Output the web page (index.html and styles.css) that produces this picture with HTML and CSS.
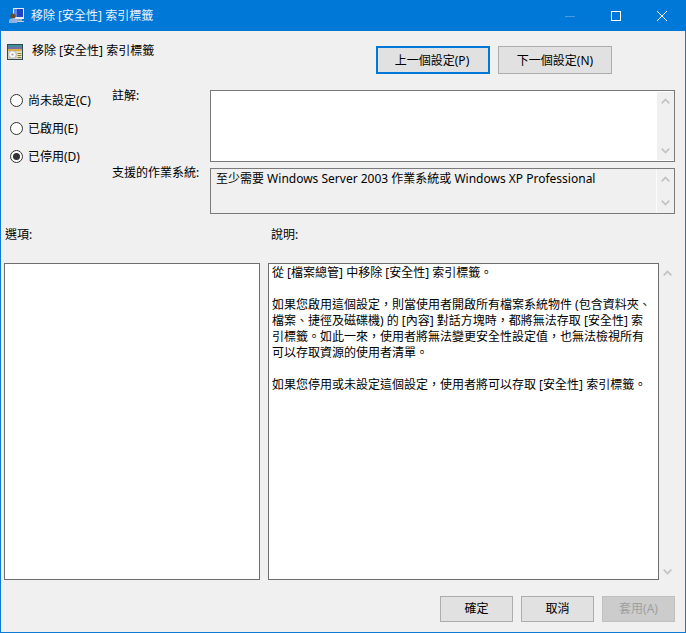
FILE: index.html
```html
<!DOCTYPE html>
<html lang="zh-Hant">
<head>
<meta charset="utf-8">
<title>移除 [安全性] 索引標籤</title>
<link rel="stylesheet" href="styles.css">
</head>
<body>
<svg class="defs" width="0" height="0" aria-hidden="true">
  <symbol id="up" viewBox="0 0 9 6"><path d="M.7 5.300 4.500 1.500l3.800 3.800" fill="none" stroke="currentColor" stroke-width="1.700"/></symbol>
  <symbol id="down" viewBox="0 0 9 6"><path d="M.7.7l3.800 3.800L8.300.7" fill="none" stroke="currentColor" stroke-width="1.700"/></symbol>
</svg>
<div class="window">
  <header class="titlebar">
    <svg class="icon" viewBox="0 0 16 16" aria-hidden="true">
      <rect x="4" y="0" width="11" height="11" fill="#e4ecf6"/>
      <rect x="5" y="1" width="9" height="8" fill="#1f45c4"/>
      <rect x="5" y="1" width="3" height="8" fill="#5f86e0"/>
      <rect x="7" y="11" width="6" height="2" fill="#9aa6b8"/>
      <rect x="5" y="13" width="10" height="1" fill="#c4ccd8"/>
      <circle cx="4" cy="8" r="2.600" fill="#6b4a2c"/>
      <path d="M0 15v-2c0-1.800 1.700-2.800 4-2.800S8 11.200 8 13v2z" fill="#8db4e0"/>
    </svg>
    <span class="title">移除 [安全性] 索引標籤</span>
    <div class="controls">
      <span class="control"><svg width="10" height="10" viewBox="0 0 10 10"><path d="M0 5.500h10" stroke="#4a9be0"/></svg></span>
      <span class="control"><svg width="10" height="10" viewBox="0 0 10 10"><rect x=".5" y=".5" width="9" height="9" fill="none" stroke="#fff"/></svg></span>
      <span class="control"><svg width="10" height="10" viewBox="0 0 10 10"><path d="M0 0l10 10M10 0 0 10" stroke="#fff"/></svg></span>
    </div>
  </header>
  <main class="content">
    <section class="head">
      <svg class="policy-icon" viewBox="0 0 16 16" aria-hidden="true">
        <rect x="0" y="0" width="16" height="16" fill="#2f4a50"/>
        <rect x="1" y="1" width="14" height="2" fill="#3f8f96"/>
        <rect x="1" y="3" width="14" height="2" fill="#7a6aa8"/>
        <rect x="1" y="5" width="14" height="2" fill="#d8b040"/>
        <rect x="1" y="7" width="14" height="8" fill="#d8d4c0"/>
        <circle cx="5.500" cy="10.500" r="3.800" fill="#f6f6f6" stroke="#9a9a9a" stroke-width=".6"/>
        <circle cx="5.500" cy="10.500" r="1.100" fill="#98a0a8"/>
        <rect x="10" y="8" width="5" height="6" fill="#f2e6a8"/>
        <path d="M10.500 9.500h4M10.500 11.500h4M10.500 13.500h4" stroke="#8a7a3a"/>
      </svg>
      <span class="policy-name">移除 [安全性] 索引標籤</span>
      <div class="nav">
        <button class="btn btn-nav btn-default">上一個設定(P)</button>
        <button class="btn btn-nav">下一個設定(N)</button>
      </div>
    </section>
    <section class="settings">
      <div class="radios">
        <label class="radio"><input type="radio" name="s"><span class="radio-text">尚未設定(C)</span></label>
        <label class="radio"><input type="radio" name="s"><span class="radio-text">已啟用(E)</span></label>
        <label class="radio"><input type="radio" name="s" checked><span class="radio-text">已停用(D)</span></label>
      </div>
      <div class="fields">
        <div class="label label-comment">註解:</div>
        <div class="box box-comment">
          <div class="box-body"></div>
          <div class="scroll scroll-comment"><svg class="chev"><use href="#up"/></svg><svg class="chev"><use href="#down"/></svg></div>
        </div>
        <div class="label label-support">支援的作業系統:</div>
        <div class="box box-support">
          <div class="box-body">至少需要 Windows Server 2003 作業系統或 Windows XP Professional</div>
          <div class="scroll scroll-support"><svg class="chev"><use href="#up"/></svg><svg class="chev"><use href="#down"/></svg></div>
        </div>
      </div>
    </section>
    <section class="pane-labels">
      <div class="label">選項:</div>
      <div class="label label-help">說明:</div>
    </section>
    <section class="panes">
      <div class="pane"></div>
      <div class="help-wrap">
        <div class="pane help">從 [檔案總管] 中移除 [安全性] 索引標籤。<br><br>如果您啟用這個設定&#xFF0C;則當使用者開啟所有檔案系統物件 (包含資料夾、<br>檔案、捷徑及磁碟機) 的 [內容] 對話方塊時&#xFF0C;都將無法存取 [安全性] 索<br>引標籤。如此一來&#xFF0C;使用者將無法變更安全性設定值&#xFF0C;也無法檢視所有<br>可以存取資源的使用者清單。<br><br>如果您停用或未設定這個設定&#xFF0C;使用者將可以存取 [安全性] 索引標籤。</div>
        <div class="scroll scroll-help"><svg class="chev"><use href="#up"/></svg><svg class="chev"><use href="#down"/></svg></div>
      </div>
    </section>
    <footer class="footer">
      <button class="btn btn-foot">確定</button>
      <button class="btn btn-foot">取消</button>
      <button class="btn btn-foot btn-disabled">套用(A)</button>
    </footer>
  </main>
</div>
</body>
</html>
```
FILE: styles.css
```css
* { box-sizing: border-box; }
html, body { margin: 0; padding: 0; }
body {
  font-family: "Noto Sans", "Noto Sans CJK TC", sans-serif;
  font-size: 12px;
  line-height: 16px;
  color: #000;
  background: #f0f0f0;
}
.defs { position: absolute; }
.window {
  width: 686px;
  height: 633px;
  border: 1px solid #0f7ad6;
  border-top: 0;
  background: #f0f0f0;
  display: flex;
  flex-direction: column;
}
.titlebar {
  height: 31px;
  flex: none;
  margin: 0 -1px;
  padding: 0 1px 0 9px;
  background: #0078d7;
  color: #e8f2fb;
  display: flex;
  align-items: center;
}
.icon { width: 16px; height: 16px; margin-right: 6px; }
.title { white-space: nowrap; }
.controls { margin-left: auto; display: flex; }
.control { width: 46px; height: 31px; display: flex; align-items: center; justify-content: center; }
.control svg { display: block; }

.content { flex: 1; display: flex; flex-direction: column; }

.head { height: 55px; flex: none; display: flex; align-items: flex-start; padding: 13px 73px 0 6px; }
.policy-icon { width: 16px; height: 16px; flex: none; }
.policy-name { margin-left: 9px; margin-top: -1px; white-space: nowrap; }
.nav { margin-left: auto; margin-top: 2px; display: flex; gap: 8px; }

.btn {
  font: inherit;
  color: #000;
  background: #e1e1e1;
  border: 1px solid #adadad;
  padding: 0;
  white-space: nowrap;
}
.btn-nav { width: 114px; height: 28px; padding-top: 2px; }
.btn-default { border: 2px solid #0078d7; padding-right: 2px; }
.btn-foot { width: 73px; height: 26px; }
.btn-disabled { background: #cccccc; border-color: #bfbfbf; color: #a0a0a0; }

.settings { display: flex; flex: none; }
.radios { width: 112px; flex: none; padding-left: 9px; display: flex; flex-direction: column; }
.radio { height: 28px; display: flex; align-items: center; white-space: nowrap; }
.radio-text { padding-top: 2px; }
.radio input {
  appearance: none;
  width: 13px;
  height: 13px;
  margin: 0 5px 0 0;
  border: 1px solid #333;
  border-radius: 50%;
  background: #fff;
  flex: none;
  display: flex;
  align-items: center;
  justify-content: center;
}
.radio input:checked::after {
  content: "";
  width: 7px;
  height: 7px;
  border-radius: 50%;
  background: #333;
}
.fields { display: grid; grid-template-columns: 97px 466px; grid-template-rows: 76px 52px; margin-left: -1px; padding-right: 1px; }
.box { margin-left: 1px; }
.label { white-space: nowrap; }
.label-comment { padding-top: 2px; }
.label-support { padding-top: 3px; }
.box { border: 1px solid #7a7a7a; display: flex; }
.box-comment { height: 72px; margin-top: 4px; background: #fff; }
.box-support { height: 46px; margin-top: 6px; background: #f0f0f0; }
.box-body { flex: 1; padding: 2px 5px; white-space: nowrap; }
.scroll {
  flex: none;
  display: flex;
  flex-direction: column;
  justify-content: space-between;
  align-items: center;
  color: #c2c2c2;
  background: #f0f0f0;
}
.chev { width: 9px; height: 6px; display: block; }
.scroll-comment { width: 17px; margin: 1px 0; padding: 6px 0 6px; }
.scroll-support { width: 18px; border-left: 1px solid #fbfbfb; padding: 7px 0 7px; }
.scroll-help { width: 17px; padding: 7px 0 5px; }

.pane-labels { display: grid; grid-template-columns: 256px 408px; column-gap: 8px; margin-top: 13px; padding-left: 4px; flex: none; }
.label-help { padding-left: 2px; }
.panes { display: grid; grid-template-columns: 256px 408px; column-gap: 8px; margin-top: 20px; padding-left: 3px; flex: none; }
.pane { height: 317px; border: 1px solid #6e6e6e; background: #fff; }
.help-wrap { display: flex; height: 317px; }
.help { flex: 1; padding: 1px 3px 0; white-space: nowrap; }

.footer { display: flex; justify-content: flex-end; gap: 8px; margin-top: 16px; padding-right: 10px; flex: none; }
```
